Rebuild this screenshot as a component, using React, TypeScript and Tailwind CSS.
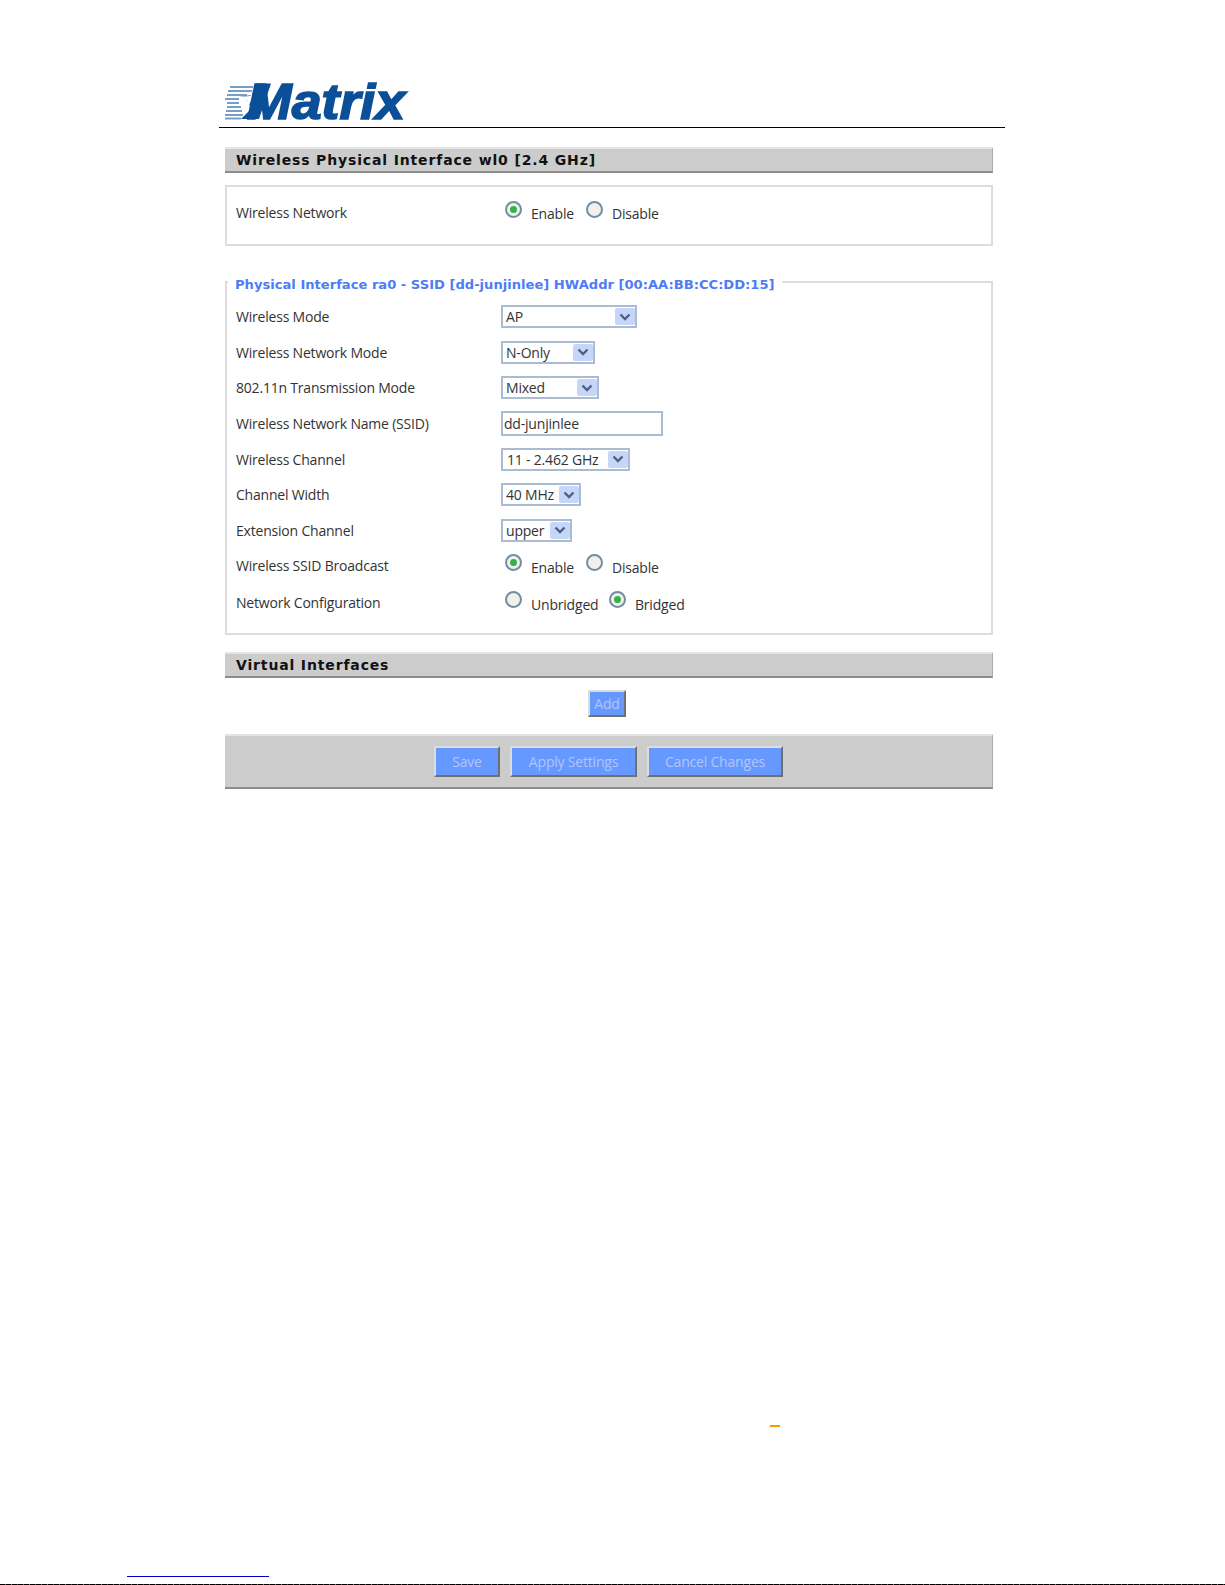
const FONT = "font-['Open_Sans','Noto_Sans',sans-serif]";
const TEXT = "text-[14px] tracking-[-0.2px]";

function Logo() {
  return (
    <svg width="186" height="60" viewBox="0 -10 186 60" className="block shrink-0 -mt-[10px]">
      {[
        [4, 5, 23], [8, 3, 24], [12, 2, 20], [16, 0, 14], [20, 2, 12], [24, 2, 14], [28, 1, 16], [32, 0, 18], [35.5, 0, 16],
      ].map(([y, x, w]) => (
        <rect key={y} x={x} y={y} width={w} height="2" fill="#0b4f98" opacity={0.55} />
      ))}
      <path d="M31 1.5 L46 1.5 L34 37 L16 37 L26 27 L23 19 L14 15 L27 13 Z" fill="#0b4f98" />
      <path d="M33 7 L27 17 L20 31 L23 19 L11 15 L25 14 Z" fill="#ffffff" />
      <text x="22" y="37" fontFamily="'Liberation Sans', sans-serif" fontStyle="italic" fontWeight="700" fontSize="50" fill="#0b4f98" stroke="#0b4f98" strokeWidth="1.6" textLength="158" lengthAdjust="spacingAndGlyphs">Matrix</text>
    </svg>
  );
}

function Bar({ children }: { children: React.ReactNode }) {
  return (
    <div className="h-[26px] flex items-center pl-[11px] bg-[#cccccc] border-t-2 border-t-[#e4e4e4] border-b-2 border-b-[#8c8c8c] border-r border-r-[#aaaaaa] font-['DejaVu_Sans',sans-serif] font-bold text-[14px] tracking-[0.85px] text-[#111111]">
      {children}
    </div>
  );
}

function Radio({ on }: { on?: boolean }) {
  return (
    <span className="w-[17px] h-[17px] mb-[6px] rounded-full border-2 border-[#6f8ea6] bg-[#f1f1ea] flex items-center justify-center shrink-0">
      {on ? <span className="w-[7px] h-[7px] rounded-full bg-[#35b04a]" /> : null}
    </span>
  );
}

function Radios({ items }: { items: [string, boolean, number][] }) {
  return (
    <div className="flex items-center pl-[4px]">
      {items.map(([label, on, w]) => (
        <div key={label} className="flex items-center" style={{ width: w }}>
          <Radio on={on} />
          <span className={`ml-[9px] mt-[3px] ${TEXT}`}>{label}</span>
        </div>
      ))}
    </div>
  );
}

function Select({ value, w, pl = 3 }: { value: string; w: number; pl?: number }) {
  return (
    <div className="h-[23px] flex items-center justify-between border-2 border-[#aabcd2] bg-white" style={{ width: w, paddingLeft: pl }}>
      <span className={TEXT}>{value}</span>
      <span className="w-[20px] h-[17px] rounded-[2px] bg-[#c5d6f8] flex items-center justify-center">
        <svg width="12" height="8" viewBox="0 0 12 8"><path d="M1.5 1.5 L6 6 L10.5 1.5" fill="none" stroke="#4d6185" strokeWidth="2.4" /></svg>
      </span>
    </div>
  );
}

function Row({ label, children, h = 35.6 }: { label: string; children: React.ReactNode; h?: number }) {
  return (
    <div className="flex items-center" style={{ height: h }}>
      <div className={`w-[265px] ${TEXT}`}>{label}</div>
      {children}
    </div>
  );
}

function Button({ label, w, h }: { label: string; w: number; h: number }) {
  return (
    <div className={`flex items-center justify-center bg-[#6699ff] text-[#b2c5fb] ${TEXT} border-2 border-t-[#dcdcdc] border-l-[#dcdcdc] border-r-[#707070] border-b-[#707070]`} style={{ width: w, height: h }}>
      {label}
    </div>
  );
}

export default function App() {
  return (
    <div className={`${FONT} w-[1225px] h-[1585px] bg-white text-[#333333] flex flex-col overflow-hidden`}>
      <div className="ml-[219px] w-[786px] pt-[82px]">
        <div className="flex items-start pl-[6px] h-[45px]"><Logo /></div>
        <div className="relative h-px bg-black" />
        <div className="pl-[6px] pr-[12px] pt-[19px]">
          <Bar>Wireless Physical Interface wl0 [2.4 GHz]</Bar>
          <div className="mt-[12px] h-[61px] border-2 border-[#dddddd] pl-[9px] pt-[7px]">
            <Row label="Wireless Network" h={36}>
              <Radios items={[["Enable", true, 81], ["Disable", false, 90]]} />
            </Row>
          </div>
          <div className="mt-[35px] h-[354px] border-2 border-[#dddddd] pl-[9px] relative">
            <div className="absolute -top-[8px] left-[1px] px-[7px] bg-white font-['DejaVu_Sans',sans-serif] font-bold text-[13.1px] text-[#4d7cf7] whitespace-nowrap">
              Physical Interface ra0 - SSID [dd-junjinlee] HWAddr [00:AA:BB:CC:DD:15]
            </div>
            <div className="pt-[16px]">
              <Row label="Wireless Mode"><Select value="AP" w={136} pl={3} /></Row>
              <Row label="Wireless Network Mode"><Select value="N-Only" w={94} /></Row>
              <Row label="802.11n Transmission Mode"><Select value="Mixed" w={98} /></Row>
              <Row label="Wireless Network Name (SSID)">
                <input readOnly value="dd-junjinlee" className={`w-[162px] h-[25px] border-2 border-[#aabcd2] pl-[1px] ${TEXT} outline-none`} />
              </Row>
              <Row label="Wireless Channel"><Select value="11 - 2.462 GHz" w={129} pl={4} /></Row>
              <Row label="Channel Width"><Select value="40 MHz" w={80} /></Row>
              <Row label="Extension Channel"><Select value="upper" w={71} /></Row>
              <Row label="Wireless SSID Broadcast">
                <Radios items={[["Enable", true, 81], ["Disable", false, 90]]} />
              </Row>
              <Row label="Network Configuration" h={37.6}>
                <Radios items={[["Unbridged", false, 104], ["Bridged", true, 90]]} />
              </Row>
            </div>
          </div>
          <div className="mt-[17px]"><Bar>Virtual Interfaces</Bar></div>
          <div className="h-[56px] flex items-center pl-[363px] pb-[6px]"><Button label="Add" w={38} h={27} /></div>
          <div className="h-[55px] flex items-center pl-[209px] gap-[10px] bg-[#cccccc] border-t-2 border-t-[#e4e4e4] border-b-2 border-b-[#8c8c8c] border-r border-r-[#aaaaaa]">
            <Button label="Save" w={66} h={31} />
            <Button label="Apply Settings" w={127} h={31} />
            <Button label="Cancel Changes" w={136} h={31} />
          </div>
        </div>
      </div>
      <div className="ml-[770px] mt-[636px] w-[10px] h-[2px] bg-[#ff9900]" />
      <div className="ml-[127px] mt-[149px] w-[142px] h-px bg-[#0000cc]" />
      <div className="mt-auto h-px bg-[repeating-linear-gradient(90deg,#000_0_5px,#c33_5px_6px,#000_6px_11px,#3a3_11px_12px,#000_12px_17px,#33c_17px_18px)]" />
    </div>
  );
}
